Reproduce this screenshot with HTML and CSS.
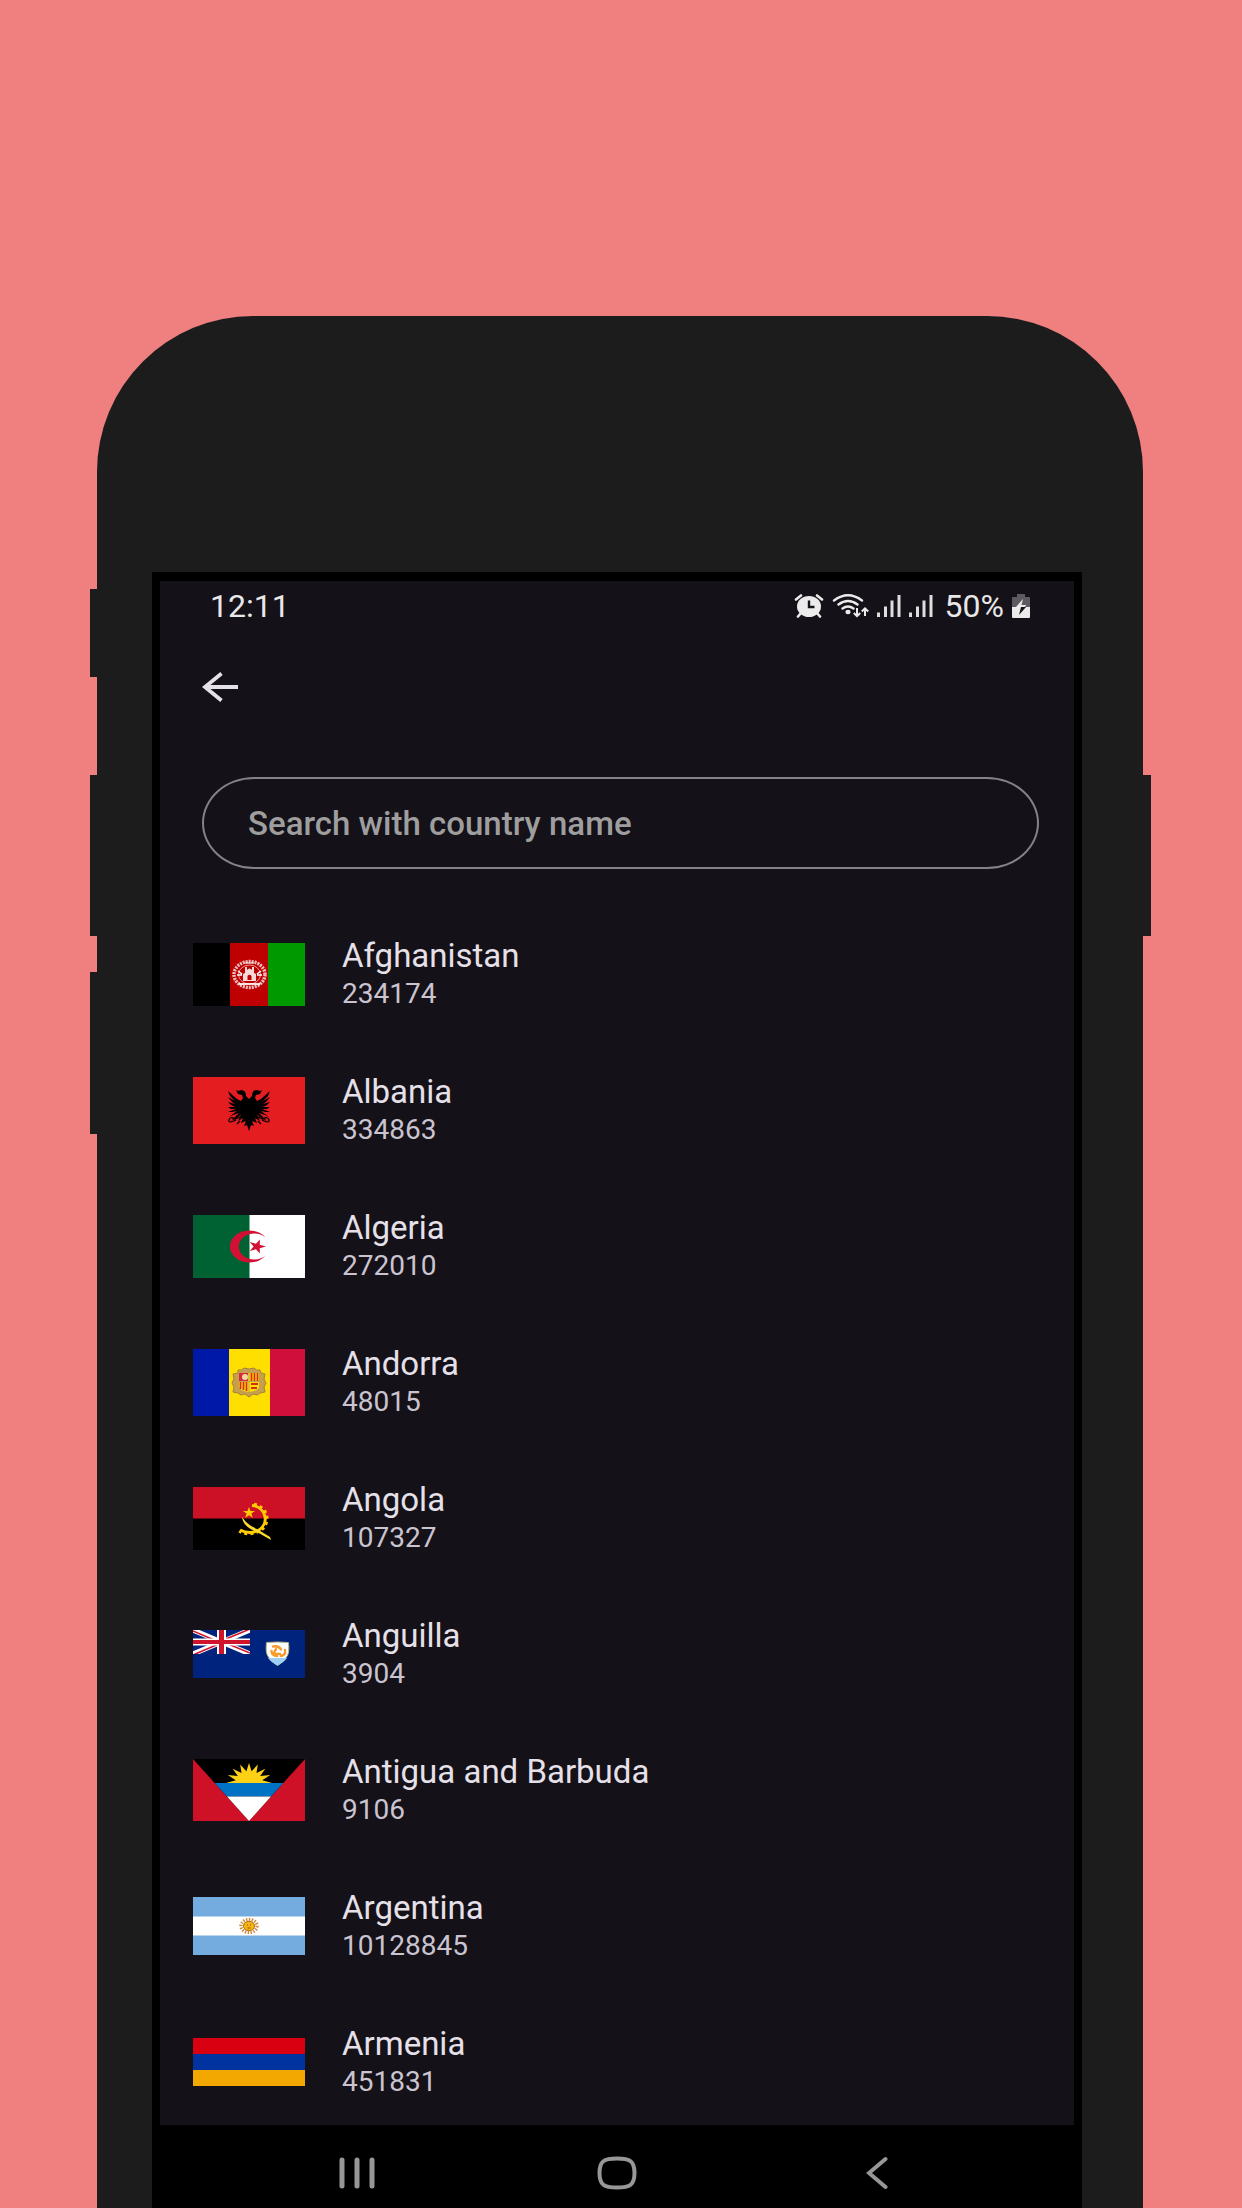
FILE: index.html
```html
<!DOCTYPE html>
<html lang="en">
<head>
<meta charset="utf-8">
<meta name="viewport" content="width=device-width, initial-scale=1">
<title>Countries</title>
<link rel="stylesheet" href="styles.css">
</head>
<body>
<main class="phone">
  <span class="key key-mute"></span>
  <span class="key key-up"></span>
  <span class="key key-down"></span>
  <span class="key key-power"></span>
  <div class="screen">
    <div class="app">
      <div class="status">
        <time class="clock">12:11</time>
        <div class="indicators">
          <svg class="alarm" width="30" height="24" viewBox="0 0 30 24" aria-hidden="true">
            <g stroke="#ebebeb" stroke-width="2.6" stroke-linecap="round" fill="none"><path d="M2 5.500L7 1.500M28 5.500L23 1.500M7 19L4 22.500M23 19L26 22.500"/></g>
            <ellipse cx="15" cy="12.500" rx="12" ry="10.500" fill="#ebebeb"/>
            <path d="M15 6.500v6.500h5.500" stroke="#151118" stroke-width="2.400" fill="none"/>
          </svg>
          <svg class="wifi" width="37" height="24" viewBox="0 0 37 24" aria-hidden="true">
            <g stroke="#ebebeb" stroke-width="2.400" fill="none" stroke-linecap="round"><path d="M2 6.500Q16-4 30 6.500M6.500 10.500Q16 3.500 25.500 10.500M10.500 14.500Q16 10.500 21.500 14.500"/></g>
            <ellipse cx="16" cy="18" rx="2.600" ry="2.200" fill="#ebebeb"/>
            <path d="M25 14v8M21.800 19l3.200 3.200 3.200-3.200M33 22v-7M29.800 17.500l3.200-3.200 3.200 3.200" stroke="#ebebeb" stroke-width="2" fill="none"/>
          </svg>
          <svg class="signal" width="24" height="22" viewBox="0 0 24 22" aria-hidden="true"><path d="M1.500 17.500V22M8.500 11.500V22M15 5.500V22M22 0V22" stroke="#dedede" stroke-width="3"/></svg>
          <svg class="signal" width="24" height="22" viewBox="0 0 24 22" aria-hidden="true"><path d="M1.500 17.500V22M8.500 11.500V22M15 5.500V22M22 0V22" stroke="#dedede" stroke-width="3"/></svg>
          <span class="charge">50%</span>
          <svg class="battery" width="18" height="24" viewBox="0 0 18 24" aria-hidden="true">
            <path d="M5 0h8v3h4q1 0 1 1v9H0V4q0-1 1-1h4z" fill="#5d5b60"/>
            <path d="M0 13h18v10q0 1-1 1H1q-1 0-1-1z" fill="#ebebeb"/>
            <path d="M11 5L4 13h5z" fill="#ebebeb"/><path d="M9 13L7 21l7-8z" fill="#151118"/><path d="M9 11h5.500l-2 2H8z" fill="#ebebeb"/>
          </svg>
        </div>
      </div>
      <header class="bar">
        <button class="back" type="button" aria-label="Back">
          <svg width="36" height="32" viewBox="0 0 36 32" aria-hidden="true"><path d="M36 16H3M19.500 2.500L3 16l16.500 13.500" stroke="#e6e0e9" stroke-width="3.800" fill="none"/></svg>
        </button>
      </header>
      <form class="search">
        <input class="field" type="text" aria-label="Search with country name" placeholder="Search with country name">
      </form>
      <ul class="list">
        <li><a class="row" href="#afghanistan">
          <svg class="flag" width="112" height="63" viewBox="0 0 112 63" aria-hidden="true">
            <path d="M0 0h38v63H0z" fill="#000"/><path d="M37 0h38v63H37z" fill="#bf0000"/><path d="M75 0h37v63H75z" fill="#009900"/>
            <g fill="none" stroke="#fff"><ellipse cx="56.500" cy="31.500" rx="15.500" ry="13" stroke-width="3.400" stroke-dasharray="2 1" opacity=".75"/><ellipse cx="56.500" cy="31.500" rx="11" ry="9.500" stroke-width="1" opacity=".6"/><path d="M44 32h5M64 32h5M45 28l4 3M68 28l-4 3" stroke-width="1.500"/></g>
            <path d="M50 38v-7l2-1v-6h2v3q2.500-3 5 0v-3h2v6l2 1v7zM46 40h21v2H46z" fill="#fff" opacity=".85"/><path d="M54.500 37v-4q2-2.500 4 0v4z" fill="#bf0000"/><path d="M52 20h9" stroke="#fff"/>
          </svg>
          <span class="text"><span class="name">Afghanistan</span><span class="count">234174</span></span></a></li>
        <li><a class="row" href="#albania">
          <svg class="flag" width="112" height="67" viewBox="0 0 112 67" aria-hidden="true">
            <path d="M0 0h112v67H0z" fill="#e41e20"/>
            <g id="half"><path d="M56 22L53 19Q53 13 48 13L45 14 43 13 45 17 49 18 50 21 48 24 44 22 35 14 37 19 42 24 35 20 38 24 42 27 35 25 38 28 42 30 35 30 38 32 43 32 35 35 39 35 44 34 36 40 40 38 46 36 38 44 42 42 48 38 45 44 50 41 48 46 53 44 51 49 54 48 56 54z" fill="#000"/><path d="M50 39L42 42Q37 39 36 43T43 43M47 44l-3 3" stroke="#000" stroke-width="1.200" fill="none"/></g>
            <use href="#half" transform="matrix(-1 0 0 1 112 0)"/>
          </svg>
          <span class="text"><span class="name">Albania</span><span class="count">334863</span></span></a></li>
        <li><a class="row" href="#algeria">
          <svg class="flag" width="112" height="63" viewBox="0 0 112 63" aria-hidden="true">
            <path d="M0 0h57v63H0z" fill="#006233"/><path d="M56.500 0H112v63H56.500z" fill="#fff"/>
            <path d="M72.500 22.500A19.500 16 0 1 0 72.500 40.500A15.500 13 0 1 1 72.500 22.500z" fill="#d21034"/>
            <path d="M73 31.500L56.700 27.100 66.800 38.600 66.800 24.400 56.700 35.900z" fill="#d21034"/>
          </svg>
          <span class="text"><span class="name">Algeria</span><span class="count">272010</span></span></a></li>
        <li><a class="row" href="#andorra">
          <svg class="flag" width="112" height="67" viewBox="0 0 112 67" aria-hidden="true">
            <path d="M0 0h37v67H0z" fill="#0018a8"/><path d="M36 0h41v67H36z" fill="#fedf00"/><path d="M77 0h35v67H77z" fill="#d0103a"/>
            <path d="M45 21q4 1 6-2 5 2 10 0 2 3 6 2l1 3 4 1-1 5 2 4-2 4 1 5-5 1-3 2-4-1-4 3-4-3-4 1-3-2-5-1 1-5-2-4 2-4-1-5 5-1z" fill="#c6a04e" stroke="#a6813c"/>
            <path d="M46 24h20v14q-1 4-10 5-9-1-10-5z" fill="#fedf00"/><path d="M46 24h9v8h-9z" fill="#d52b3a"/><circle cx="52" cy="28" r="3" fill="#f4d9a0"/>
            <path d="M58.500 24v8M61.500 24v8M64.500 24v8M47.500 33v7M50.500 33v8M53.500 33v9" stroke="#d52b1e" stroke-width="1.700"/><path d="M58 35h7M58 39h6" stroke="#d52b1e" stroke-width="2"/><path d="M46 32.500h20M56 24v19" stroke="#c6a04e"/>
          </svg>
          <span class="text"><span class="name">Andorra</span><span class="count">48015</span></span></a></li>
        <li><a class="row" href="#angola">
          <svg class="flag" width="112" height="63" viewBox="0 0 112 63" aria-hidden="true">
            <path d="M0 0h112v32H0z" fill="#cc1126"/><path d="M0 31.500h112V63H0z" fill="#000"/>
            <path d="M59 18.500A14.500 13.500 0 0 1 66 43Q57 48 47 43" stroke="#ffcb00" stroke-width="3" fill="none"/>
            <path d="M61 17A16.500 15 0 0 1 68 43.500Q57 50 46 44.500" stroke="#ffcb00" stroke-width="2.500" stroke-dasharray="3 3.200" fill="none"/>
            <path d="M49 30q5 8 15 12l13 8 1 3-14-8q-14-5-15-15z" fill="#ffdb30"/>
            <path d="M56 20l1.500 4h4.500l-3.600 2.600 1.300 4.100L56 28.200l-3.700 2.500 1.300-4.100L50 24h4.500z" fill="#ffcb00"/>
          </svg>
          <span class="text"><span class="name">Angola</span><span class="count">107327</span></span></a></li>
        <li><a class="row" href="#anguilla">
          <svg class="flag" width="112" height="48" viewBox="0 0 112 48" aria-hidden="true">
            <path d="M0 0h112v48H0z" fill="#00247d"/>
            <svg width="57" height="24" viewBox="0 0 57 24"><path d="M0 0L57 24M57 0L0 24" stroke="#fff" stroke-width="5"/><path d="M0 1L28 13M57 -1L28 11M0 25L28 13M57 23L28 11" stroke="#cf142b" stroke-width="1.600"/><path d="M28.500 0v24" stroke="#fff" stroke-width="9"/><path d="M0 12h57" stroke="#fff" stroke-width="7"/><path d="M0 12h57" stroke="#cf142b" stroke-width="4"/><path d="M28.500 0v24" stroke="#cf142b" stroke-width="5"/></svg>
            <path d="M73.500 12.500q11-1 22 0 1 9-1 13-3 6-10 10-7-4-10-10-2-4-1-13z" fill="#fff" stroke="#b6b57a"/>
            <path d="M75 28h19q-3 4-9.500 7.500Q78 32 75 28z" fill="#9fd0f4"/>
            <g fill="none" stroke="#f79a2a" stroke-width="2.400" stroke-linecap="round"><path d="M80 16.500q6-1 8 3M92 20q1 5-4 6M84 26q-5 0-5.500-5M83 19l-2 4M87 24h-4"/></g>
          </svg>
          <span class="text"><span class="name">Anguilla</span><span class="count">3904</span></span></a></li>
        <li><a class="row" href="#antigua-and-barbuda">
          <svg class="flag" width="112" height="62" viewBox="0 0 112 62" aria-hidden="true">
            <path d="M0 0h112v62H0z" fill="#ce1126"/><path d="M0 0h112L56 62z" fill="#000"/><path d="M21.700 24h68.600L78 37.500H34z" fill="#0072c6"/><path d="M34 37.500h44L56 62z" fill="#fff"/>
            <path d="M79 24L69.200 21.300 77.200 16 67.200 17.100 72.300 9.700 63.500 13.900 64.800 5.500 58.600 12.200 56 4 53.400 12.200 47.200 5.500 48.500 13.900 39.700 9.700 44.800 17.100 34.800 16 42.800 21.300 33 24z" fill="#fcd116"/>
          </svg>
          <span class="text"><span class="name">Antigua and Barbuda</span><span class="count">9106</span></span></a></li>
        <li><a class="row" href="#argentina">
          <svg class="flag" width="112" height="58" viewBox="0 0 112 58" aria-hidden="true">
            <path d="M0 0h112v58H0z" fill="#74acdf"/><path d="M0 19.500h112v19H0z" fill="#fff"/>
            <ellipse cx="56" cy="29" rx="8" ry="6.500" fill="none" stroke="#cf8b3a" stroke-width="3.400" stroke-dasharray="1.400 1.400"/><ellipse cx="56" cy="29" rx="5.500" ry="4.700" fill="#f6b40e" stroke="#b5701c"/><path d="M54 28h1M57 28h1M54.500 31h3" stroke="#85541a"/>
          </svg>
          <span class="text"><span class="name">Argentina</span><span class="count">10128845</span></span></a></li>
        <li><a class="row" href="#armenia">
          <svg class="flag" width="112" height="48" viewBox="0 0 112 48" aria-hidden="true">
            <path d="M0 0h112v16H0z" fill="#d90012"/><path d="M0 16h112v16H0z" fill="#0033a0"/><path d="M0 32h112v16H0z" fill="#f2a800"/>
          </svg>
          <span class="text"><span class="name">Armenia</span><span class="count">451831</span></span></a></li>
      </ul>
    </div>
    <nav class="nav">
      <button class="nav-key" type="button" aria-label="Recent apps"><svg width="36" height="32" viewBox="0 0 36 32" aria-hidden="true"><path d="M3 3v26M18 3v26M33 3v26" stroke="#979797" stroke-width="5" stroke-linecap="round"/></svg></button>
      <button class="nav-key" type="button" aria-label="Home"><svg width="40" height="34" viewBox="0 0 40 34" aria-hidden="true"><path d="M20 2.500C33 2.500 37.500 5 37.500 17S33 31.500 20 31.500 2.500 29 2.500 17 7 2.500 20 2.500z" stroke="#979797" stroke-width="4" fill="none"/></svg></button>
      <button class="nav-key" type="button" aria-label="Back"><svg width="22" height="34" viewBox="0 0 22 34" aria-hidden="true"><path d="M19.500 3L3 17l16.500 14" stroke="#979797" stroke-width="4" stroke-linecap="round" fill="none"/></svg></button>
    </nav>
  </div>
</main>
</body>
</html>
```
FILE: styles.css
```css
* {
  box-sizing: border-box;
}

body {
  margin: 0;
  min-height: 100vh;
  padding: 316px 99px 0 97px;
  background: #f08080;
  font-family: Roboto, "Liberation Sans", sans-serif;
}

button {
  margin: 0;
  padding: 0;
  border: 0;
  background: none;
}

svg {
  display: block;
  flex: none;
}

.phone {
  position: relative;
  padding: 256px 61px 0 55px;
  border-radius: 156px 156px 0 0;
  background: #1c1c1c;
}

.key {
  position: absolute;
  left: -7px;
  width: 7px;
  height: 161px;
  background: #1c1c1c;
}

.key-mute {
  top: 273px;
  height: 88px;
}

.key-up {
  top: 459px;
}

.key-down {
  top: 656px;
  height: 162px;
}

.key-power {
  top: 459px;
  right: -8px;
  left: auto;
  width: 8px;
}

.screen {
  padding: 9px 8px 0;
  background: #000;
}

.app {
  background: #151118;
}

.status {
  display: flex;
  align-items: center;
  justify-content: space-between;
  height: 50px;
  padding: 0 44px 0 50px;
  color: #e8e8e8;
  font-size: 32px;
  line-height: 36px;
}

.indicators {
  display: flex;
  align-items: center;
  gap: 8px;
}

.charge {
  padding-left: 4px;
}

.bar {
  display: flex;
  align-items: center;
  height: 112px;
  padding: 0 42px;
}

.search {
  padding: 34px 35px 0 42px;
}

.field {
  display: block;
  width: 100%;
  height: 92px;
  padding: 0 44px;
  border: 2px solid #848187;
  border-radius: 52px / 46px;
  outline: none;
  background: none;
  color: #e6e0e9;
  font: 500 33px/40px Roboto, "Liberation Sans", sans-serif;
}

.field::placeholder {
  color: #9e9e9e;
  opacity: 1;
}

.list {
  display: flex;
  flex-direction: column;
  gap: 62px;
  margin: 0;
  padding: 68px 33px 26px;
  list-style: none;
}

.row {
  display: flex;
  align-items: center;
  gap: 37px;
  height: 74px;
  color: #e6e0e9;
  text-decoration: none;
}

.text {
  display: flex;
  flex-direction: column;
  gap: 2px;
  padding-top: 2px;
  line-height: 36px;
}

.name {
  font-size: 33px;
}

.count {
  color: #cac4d0;
  font-size: 28px;
}

.nav {
  display: flex;
  padding: 30px 67px 18px;
}

.nav-key {
  display: flex;
  flex: 1;
  align-items: center;
  justify-content: center;
  height: 35px;
}
```
